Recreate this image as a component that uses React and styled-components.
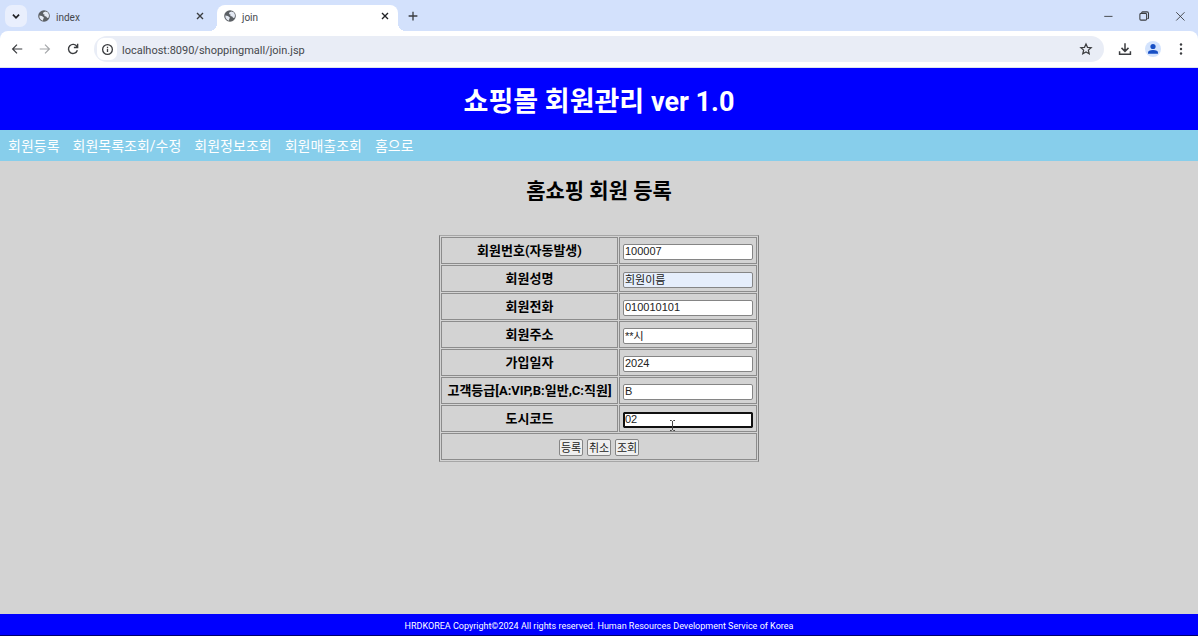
import React from "react";
import styled, { createGlobalStyle, css } from "styled-components";

const GlobalStyle = createGlobalStyle`
  *, *::before, *::after { box-sizing: border-box; }
  body {
    margin: 0;
    font-family: Roboto, "Noto Sans CJK KR", sans-serif;
    color: #000;
    background: #d3d3d3;
  }
`;

const Window = styled.div`
  display: flex;
  flex-direction: column;
  min-height: 100vh;
`;

const TabStrip = styled.div`
  display: flex;
  align-items: center;
  height: 31px;
  padding-left: 5px;
  background: #d3e1fc;
`;

const IconButton = styled.button`
  display: flex;
  align-items: center;
  justify-content: center;
  flex: none;
  width: ${(p) => p.$width || 22}px;
  height: 22px;
  padding: 0;
  border: 0;
  border-radius: 7px;
  background: ${(p) => p.$background || "transparent"};
  color: ${(p) => p.$color || "#3b3d40"};
`;

const activeTab = css`
  align-self: flex-end;
  height: 26px;
  padding-bottom: 4px;
  margin-left: 4px;
  border-radius: 8px 8px 0 0;
  background: #fff;

  &::before,
  &::after {
    content: "";
    position: absolute;
    bottom: 0;
    width: 8px;
    height: 8px;
  }
  &::before {
    right: 100%;
    background: radial-gradient(circle at 0 0, transparent 8px, #fff 8px);
  }
  &::after {
    left: 100%;
    background: radial-gradient(circle at 100% 0, transparent 8px, #fff 8px);
  }
`;

const Tab = styled.div`
  position: relative;
  display: flex;
  align-items: center;
  flex: 0 1 ${(p) => (p.$active ? 181 : 186)}px;
  gap: 6px;
  padding: 0 2px 0 ${(p) => (p.$active ? 7 : 11)}px;
  font-size: 10px;
  line-height: 16px;
  color: #45484c;
  ${(p) => p.$active && activeTab}
`;

const TabTitle = styled.span`
  flex: 1;
  padding-top: 4px;
`;

const WindowControls = styled.div`
  display: flex;
  gap: 14px;
  margin-left: auto;
  padding-right: 7px;
`;

const ToolbarBack = styled.div`
  background: #d3e1fc;
`;

const Toolbar = styled.div`
  display: flex;
  align-items: center;
  gap: 6px;
  height: 37px;
  padding: 0 6px;
  border-bottom: 1px solid #dde3ee;
  border-radius: 8px 8px 0 0;
  background: #fff;
`;

const AddressBar = styled.div`
  display: flex;
  align-items: center;
  flex: 1;
  min-width: 0;
  height: 26px;
  margin: 0 4px;
  padding: 0 7px 0 3px;
  border-radius: 13px;
  background: #e9edf6;
`;

const AddressInput = styled.input`
  flex: 1;
  min-width: 0;
  height: 20px;
  padding: 2px 0 0;
  margin-left: 5px;
  border: 0;
  outline: 0;
  background: transparent;
  font-family: inherit;
  font-size: 11px;
  color: #45484c;
`;

const Header = styled.header`
  padding: 16px 0 10px;
  background: #00f;
  color: #fff;
  text-align: center;
`;

const SiteTitle = styled.h1`
  margin: 0;
  font-size: 27px;
  line-height: 36px;
`;

const Nav = styled.nav`
  display: flex;
  gap: 13px;
  padding: 6px 8px 5px;
  background: #87ceeb;
`;

const NavLink = styled.a`
  font-size: 14px;
  line-height: 20px;
  color: #fff;
  text-decoration: none;
`;

const Main = styled.main`
  display: flex;
  flex-direction: column;
  align-items: center;
  flex: 1;
  padding-top: 15px;
`;

const PageTitle = styled.h2`
  margin: 0 0 29px;
  font-size: 21px;
  line-height: 30px;
`;

const FormTable = styled.table`
  border: 1px solid #808080;
  border-color: #a6a6a6 #808080 #a6a6a6 #808080;
  border-spacing: 1px;
`;

const cell = css`
  height: 27px;
  padding: 0 3px;
  border: 1px solid #8c8c8c;
`;

const LabelCell = styled.th`
  ${cell}
  width: 177px;
  padding: 0;
  font-size: 13px;
  line-height: 20px;
  white-space: nowrap;
`;

const FieldCell = styled.td`
  ${cell}
  position: relative;
  padding-top: 2px;
`;

const ButtonCell = styled.td`
  ${cell}
`;

const TextInput = styled.input`
  display: block;
  width: 130px;
  height: 16px;
  padding: 0 1px 1px;
  border: 1px solid #858585;
  border-radius: 2px;
  outline: ${(p) => (p.$focused ? "2px solid #101010" : "0")};
  outline-offset: -2px;
  border-color: ${(p) => (p.$focused ? "#101010" : "#858585")};
  background: ${(p) => (p.$autofilled ? "#e6eefb" : "#fff")};
  font-family: "Liberation Sans", "Noto Sans CJK KR", sans-serif;
  font-size: 11px;
  color: #222;
`;

const Buttons = styled.div`
  display: flex;
  justify-content: center;
  gap: 4px;
  padding-top: 1px;
`;

const FormButton = styled.button`
  width: 24px;
  height: 17px;
  padding: 0;
  border: 1px solid #858585;
  border-radius: 2px;
  background: #efefef;
  font-family: "Noto Sans CJK KR", sans-serif;
  font-size: 11px;
  line-height: 15px;
  color: #222;
`;

const TextCursor = styled.svg`
  position: absolute;
  top: 14px;
  left: 49px;
`;

const Footer = styled.footer`
  padding: 6px 0 3px;
  border-bottom: 1px solid #00006c;
  background: #00f;
  color: #fff;
  font-size: 9px;
  line-height: 12px;
  text-align: center;
`;

const Stroke = ({ size = 16, width = 1.4, children }) => (
  <svg width={size} height={size} viewBox="0 0 16 16" fill="none" stroke="currentColor" strokeWidth={width}>
    {children}
  </svg>
);

const Globe = () => (
  <svg width="12" height="12" viewBox="0 0 12 12" aria-hidden="true">
    <circle cx="6" cy="6" r="5.800" fill="#5b5f64" />
    <path d="M7.500 1.500L5.500 2.300 5 4l1.700.700-.500 1.300 2 .500 1 1.500 1.500-.500.300-2.500-1-2.500z" fill="#e4e9f3" />
    <path d="M1.300 5.500l2.700.500 2 1.700-.800 1.300-.200 1.800-2-1-1.400-1.800z" fill="#e4e9f3" />
  </svg>
);

const CloseIcon = () => (
  <Stroke size={12} width={1.8}>
    <path d="M4 4l8 8M12 4l-8 8" />
  </Stroke>
);

const FIELDS = [
  { id: "custno", label: "회원번호(자동발생)", value: "100007" },
  { id: "custname", label: "회원성명", value: "회원이름", autofilled: true },
  { id: "phone", label: "회원전화", value: "010010101" },
  { id: "address", label: "회원주소", value: "**시" },
  { id: "joindate", label: "가입일자", value: "2024" },
  { id: "grade", label: "고객등급[A:VIP,B:일반,C:직원]", value: "B" },
  { id: "city", label: "도시코드", value: "02", focused: true },
];

const MENU = ["회원등록", "회원목록조회/수정", "회원정보조회", "회원매출조회", "홈으로"];

function BrowserBar() {
  return (
    <>
      <TabStrip>
        <IconButton aria-label="Search tabs" $background="#e9effd" $color="#202124">
          <Stroke size={14} width={2}>
            <path d="M4.500 6.500L8 10l3.500-3.500" />
          </Stroke>
        </IconButton>
        <Tab>
          <Globe />
          <TabTitle>index</TabTitle>
          <IconButton aria-label="Close index"><CloseIcon /></IconButton>
        </Tab>
        <Tab $active>
          <Globe />
          <TabTitle>join</TabTitle>
          <IconButton aria-label="Close join" $color="#202124"><CloseIcon /></IconButton>
        </Tab>
        <IconButton aria-label="New tab" $width={30}>
          <Stroke size={14} width={1.5}>
            <path d="M8 3v10M3 8h10" />
          </Stroke>
        </IconButton>
        <WindowControls>
          <IconButton aria-label="Minimize">
            <Stroke size={12} width={1.2}><path d="M3 8.500h11" /></Stroke>
          </IconButton>
          <IconButton aria-label="Restore">
            <Stroke size={12}>
              <rect x="2.500" y="4.500" width="9" height="9" rx="1.500" />
              <path d="M5 4V3.500Q5 2.500 6 2.500h6q2 0 2 2v6q0 1-1.500 1" />
            </Stroke>
          </IconButton>
          <IconButton aria-label="Close window">
            <Stroke size={12} width={1.2}><path d="M3 3l11 11M14 3L3 14" /></Stroke>
          </IconButton>
        </WindowControls>
      </TabStrip>
      <ToolbarBack>
        <Toolbar>
          <IconButton aria-label="Back">
            <Stroke size={14}><path d="M14 8H3M8 3L3 8l5 5" /></Stroke>
          </IconButton>
          <IconButton aria-label="Forward" $color="#a5a7aa">
            <Stroke size={14}><path d="M2 8h11M8 3l5 5-5 5" /></Stroke>
          </IconButton>
          <IconButton aria-label="Reload">
            <Stroke size={14} width={1.6}>
              <path d="M13 9.500A5.200 5.200 0 1 1 12.500 5.200M13.300 2v4.300H9" />
            </Stroke>
          </IconButton>
          <AddressBar>
            <IconButton aria-label="Site information" $width={20} $background="#fff">
              <Stroke size={13} width={1.6}>
                <circle cx="8" cy="8" r="6" />
                <path d="M8 7.200v4M8 4.500v1.500" />
              </Stroke>
            </IconButton>
            <AddressInput aria-label="Address" defaultValue="localhost:8090/shoppingmall/join.jsp" />
            <IconButton aria-label="Bookmark">
              <Stroke size={14}>
                <path d="M8 2.200l1.700 3.900 4.200.4-3.200 2.800 1 4.200L8 11.300l-3.700 2.200 1-4.200-3.200-2.800 4.200-.4z" />
              </Stroke>
            </IconButton>
          </AddressBar>
          <IconButton aria-label="Downloads">
            <Stroke size={14} width={1.7}>
              <path d="M8 1.500v9M4 6.700l4 4 4-4M1.800 10.500V14h12.400v-3.500" />
            </Stroke>
          </IconButton>
          <IconButton aria-label="Profile">
            <svg width="16" height="16" viewBox="0 0 16 16">
              <circle cx="8" cy="8" r="8" fill="#d3e3fd" />
              <circle cx="8" cy="5.500" r="2.600" fill="#174fc4" />
              <path d="M3 12.800v-1.300Q3 9 8 9t5 2.500v1.300z" fill="#174fc4" />
            </svg>
          </IconButton>
          <IconButton aria-label="Menu">
            <svg width="14" height="14" viewBox="0 0 14 14" fill="currentColor">
              <circle cx="7" cy="2.500" r="1.200" />
              <circle cx="7" cy="7" r="1.200" />
              <circle cx="7" cy="11.500" r="1.200" />
            </svg>
          </IconButton>
        </Toolbar>
      </ToolbarBack>
    </>
  );
}

export default function App() {
  return (
    <Window>
      <GlobalStyle />
      <BrowserBar />
      <Header>
        <SiteTitle>쇼핑몰 회원관리 ver 1.0</SiteTitle>
      </Header>
      <Nav>
        {MENU.map((name) => (
          <NavLink href="#" key={name}>{name}</NavLink>
        ))}
      </Nav>
      <Main>
        <PageTitle>홈쇼핑 회원 등록</PageTitle>
        <form onSubmit={(event) => event.preventDefault()}>
          <FormTable>
            <tbody>
              {FIELDS.map((field) => (
                <tr key={field.id}>
                  <LabelCell scope="row">
                    <label htmlFor={field.id}>{field.label}</label>
                  </LabelCell>
                  <FieldCell>
                    <TextInput
                      id={field.id}
                      defaultValue={field.value}
                      $autofilled={field.autofilled}
                      $focused={field.focused}
                    />
                    {field.focused && (
                      <TextCursor width="7" height="11" viewBox="0 0 7 11" fill="none" stroke="#444">
                        <path d="M1 .5h1.500l1 1 1-1H6M3.500 1v9M1 10.500h1.500l1-1 1 1H6" />
                      </TextCursor>
                    )}
                  </FieldCell>
                </tr>
              ))}
              <tr>
                <ButtonCell colSpan={2}>
                  <Buttons>
                    <FormButton type="submit">등록</FormButton>
                    <FormButton type="reset">취소</FormButton>
                    <FormButton type="button">조회</FormButton>
                  </Buttons>
                </ButtonCell>
              </tr>
            </tbody>
          </FormTable>
        </form>
      </Main>
      <Footer>
        HRDKOREA Copyright©2024 All rights reserved. Human Resources Development Service of Korea
      </Footer>
    </Window>
  );
}
